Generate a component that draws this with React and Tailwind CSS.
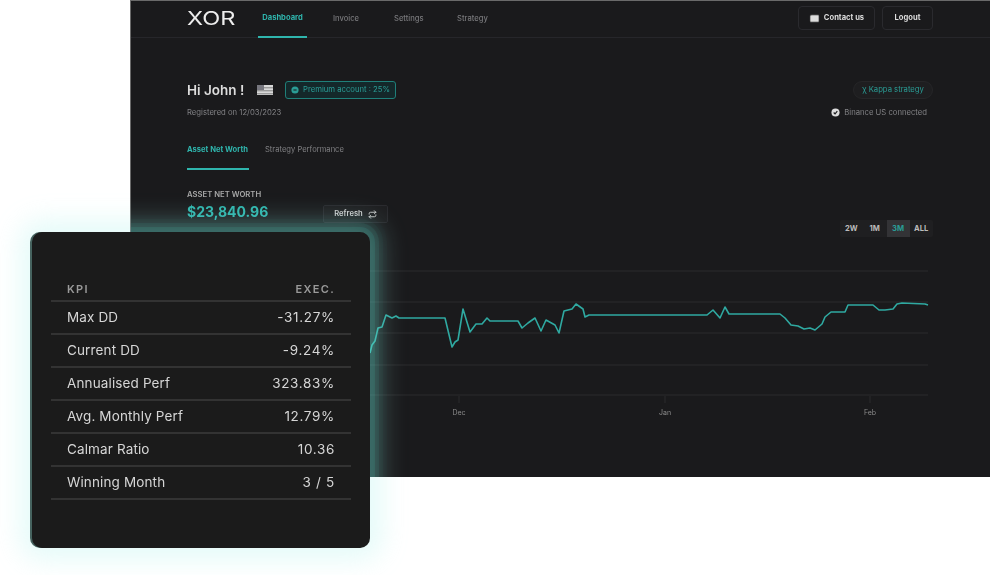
import { Mail, Repeat } from 'lucide-react';

const line = '370,353 372,345 375,341 378,328 382,327 386,315 392,318 396,316 399,318 445,318 452,347 455,342 458,340 463,309 470,332 476,324 482,324 487,318 490,321 518,321 522,328 528,323 535,318 541,331 546,320 555,325 559,333 564,311 572,309 576,304 583,309 585,317 589,315 707,315 713,310 720,318 725,307 729,314 780,314 785,318 791,325 798,326 804,329 810,328 815,330 822,324 825,317 831,312 845,312 848,305 873,305 879,310 885,310 893,309 897,304 902,303 925,304 928,305';
const grid = [271, 302, 333, 365, 395];
const ticks = [['Dec', 459], ['Jan', 665], ['Feb', 870]];
const navItems = ['Invoice', 'Settings', 'Strategy'];
const ranges = ['2W', '1M', '3M', 'ALL'];
const kpis = [
  ['Max DD', '-31.27%'],
  ['Current DD', '-9.24%'],
  ['Annualised Perf', '323.83%'],
  ['Avg. Monthly Perf', '12.79%'],
  ['Calmar Ratio', '10.36'],
  ['Winning Month', '3 / 5'],
];

function CheckDot({ className, tick }) {
  return (
    <svg viewBox="0 0 10 10" className={className}>
      <circle cx="5" cy="5" r="4.5" fill="currentColor" />
      <path d={tick} fill="none" stroke="#1a1a1c" strokeWidth="1.3" />
    </svg>
  );
}

function Flag() {
  return (
    <svg viewBox="0 0 16 10" className="w-[16px] h-[10px]">
      <rect width="16" height="10" fill="#d8d8d8" />
      <rect y="2" width="16" height="1.4" fill="#9a9a9a" />
      <rect y="5" width="16" height="1.4" fill="#9a9a9a" />
      <rect y="8" width="16" height="1.4" fill="#9a9a9a" />
      <rect width="7" height="5" fill="#77777f" />
    </svg>
  );
}

function Nav() {
  return (
    <div className="h-[37px] shrink-0 flex items-stretch justify-between pl-[56px] pr-[57px] border-b border-[#26262a]">
      <div className="flex items-stretch">
        <div className="w-[71px] flex items-center pb-[2px]">
          <span className="text-[19px] font-normal text-[#eeeeee] leading-none origin-left scale-x-[1.24]">XOR</span>
        </div>
        <div className="w-[49px] flex items-center justify-center pb-[1px] text-[7.6px] font-bold text-[#2fb5ad] border-b-2 border-[#2fb5ad] mb-[-1px]">Dashboard</div>
        <div className="flex items-center text-[7.6px] font-medium text-[#77777a]">
          <span className="ml-[26px] w-[61px]">{navItems[0]}</span>
          <span className="w-[63px]">{navItems[1]}</span>
          <span>{navItems[2]}</span>
        </div>
      </div>
      <div className="flex items-center gap-[7px] pb-[2px]">
        <button className="w-[77px] h-[24px] flex items-center justify-center gap-[4px] rounded border border-[#2a2a2e] text-[7.6px] font-bold text-[#dddddd]">
          <Mail size={11} fill="#dddddd" stroke="#1a1a1c" strokeWidth={1.5} />
          Contact us
        </button>
        <button className="w-[51px] h-[24px] rounded border border-[#2a2a2e] text-[7.6px] font-bold text-[#dddddd]">Logout</button>
      </div>
    </div>
  );
}

function Chart() {
  return (
    <svg viewBox="187 262 745 160" className="w-[745px] h-[160px] mt-[25px]">
      {grid.map((y) => (
        <line key={y} x1="187" x2="928" y1={y} y2={y} stroke="#2a2a2c" strokeWidth="1" />
      ))}
      {ticks.map(([label, x]) => (
        <g key={label}>
          <line x1={x} x2={x} y1="396" y2="403" stroke="#2a2a2c" />
          <text x={x} y="415" textAnchor="middle" fontSize="7" fill="#8a8a8a">{label}</text>
        </g>
      ))}
      <polyline points={line} fill="none" stroke="#2fa9a1" strokeWidth="1.6" strokeLinejoin="round" />
    </svg>
  );
}

function Dashboard() {
  return (
    <div className="relative ml-[130px] h-[477px] flex flex-col bg-[#1a1a1c] border-t border-l border-[#6a6a6a] font-['Inter',sans-serif] overflow-hidden">
      <div className="flex flex-col blur-[0.7px]">
        <Nav />
        <div className="pl-[56px] pr-[57px] pt-[43px] flex flex-col">
          <div className="h-[18px] flex items-center justify-between">
            <div className="flex items-center">
              <span className="text-[13.5px] font-semibold text-[#dddddd] w-[70px]">Hi John !</span>
              <Flag />
              <span className="ml-[12px] w-[111px] h-[18px] flex items-center justify-center gap-[4px] rounded-[3px] border border-[#1f7f79] bg-[#14282a] text-[7.7px] text-[#2a9d96]">
                <CheckDot className="w-[8px] h-[8px]" tick="M3 5h4" />
                Premium account : 25%
              </span>
            </div>
            <span className="w-[80px] h-[18px] flex items-center justify-center rounded-full border border-[#262628] bg-[#1e1e20] text-[7.7px] text-[#2a9d96]">χ Kappa strategy</span>
          </div>
          <div className="mt-[8px] h-[12px] flex items-center justify-between pr-[6px] text-[7.7px] text-[#828285]">
            <span>Registered on 12/03/2023</span>
            <span className="flex items-center gap-[4px]">
              <CheckDot className="w-[9px] h-[9px] text-[#dddddd]" tick="M3 5l1.5 1.5L7 3.5" />
              Binance US connected
            </span>
          </div>
          <div className="mt-[25px] flex items-start text-[7.6px]">
            <span className="w-[62px] leading-[12px] pb-[12px] border-b-2 border-[#2fb5ad] font-bold text-[#2fb5ad] whitespace-nowrap">Asset Net Worth</span>
            <span className="ml-[16px] leading-[12px] text-[#808083]">Strategy Performance</span>
          </div>
          <div className="mt-[20px] flex items-start justify-between">
            <div>
              <div className="text-[7.7px] font-semibold text-[#a8a8a8] leading-[10px]">ASSET NET WORTH</div>
              <div className="mt-[1px] flex items-center">
                <span className="w-[136px] text-[14px] font-bold leading-[20px] text-[#2fb5ad]">$23,840.96</span>
                <button className="mt-[4px] w-[65px] h-[18px] flex items-center justify-center gap-[5px] rounded-[2px] border border-[#2a2a2e] bg-[#1e1e20] text-[7.6px] font-semibold text-[#cccccc]">
                  Refresh
                  <Repeat size={9} strokeWidth={2.5} />
                </button>
              </div>
            </div>
            <div className="mt-[30px] h-[17px] flex items-stretch rounded-[2px] bg-[#1f1f21] text-[7.6px] font-bold text-[#bbbbbb]">
              {ranges.map((r) => (
                <span key={r} className={r === '3M' ? 'w-[23px] flex items-center justify-center bg-[#333336] text-[#2a9d96]' : 'w-[23.5px] flex items-center justify-center'}>{r}</span>
              ))}
            </div>
          </div>
          <Chart />
        </div>
      </div>
      {/* teal bands of the card glow, only visible over the dark window */}
      <div className="absolute left-[-99px] top-[231px] w-[338px] h-[316px] rounded-[10px] shadow-[0_0_0_5px_rgba(45,212,191,0.11),0_0_0_9px_rgba(45,212,191,0.08),0_0_0_13px_rgba(45,212,191,0.04),0_0_0_17px_rgba(45,212,191,0.02)]"></div>
    </div>
  );
}

function KpiCard() {
  return (
    <div className="absolute left-[32px] top-[232px] w-[338px] h-[316px] pt-[50px] pl-[19px] pr-[19px] rounded-[10px] bg-[#1b1b1b] font-['Inter',sans-serif] shadow-[-2px_0_0_0_#46635f,0_0_26px_12px_rgba(160,240,232,0.28)]">
      <div className="h-[20px] flex items-center justify-between pb-[4px] pl-[16px] pr-[16px] border-b-2 border-[#333333] text-[11px] font-semibold tracking-[0.12em] text-[#9a9a9a]">
        <span>KPI</span>
        <span>EXEC.</span>
      </div>
      {kpis.map(([name, value]) => (
        <div key={name} className="h-[33px] flex items-center justify-between pl-[16px] pr-[16px] border-b-2 border-[#333333] text-[13.5px] text-[#d6d6d6]">
          <span className="tracking-[0.01em]">{name}</span>
          <span className="tracking-[0.05em]">{value}</span>
        </div>
      ))}
    </div>
  );
}

export default function App() {
  return (
    <div className="relative w-[990px] h-[575px] bg-white overflow-hidden">
      <Dashboard />
      <KpiCard />
    </div>
  );
}
